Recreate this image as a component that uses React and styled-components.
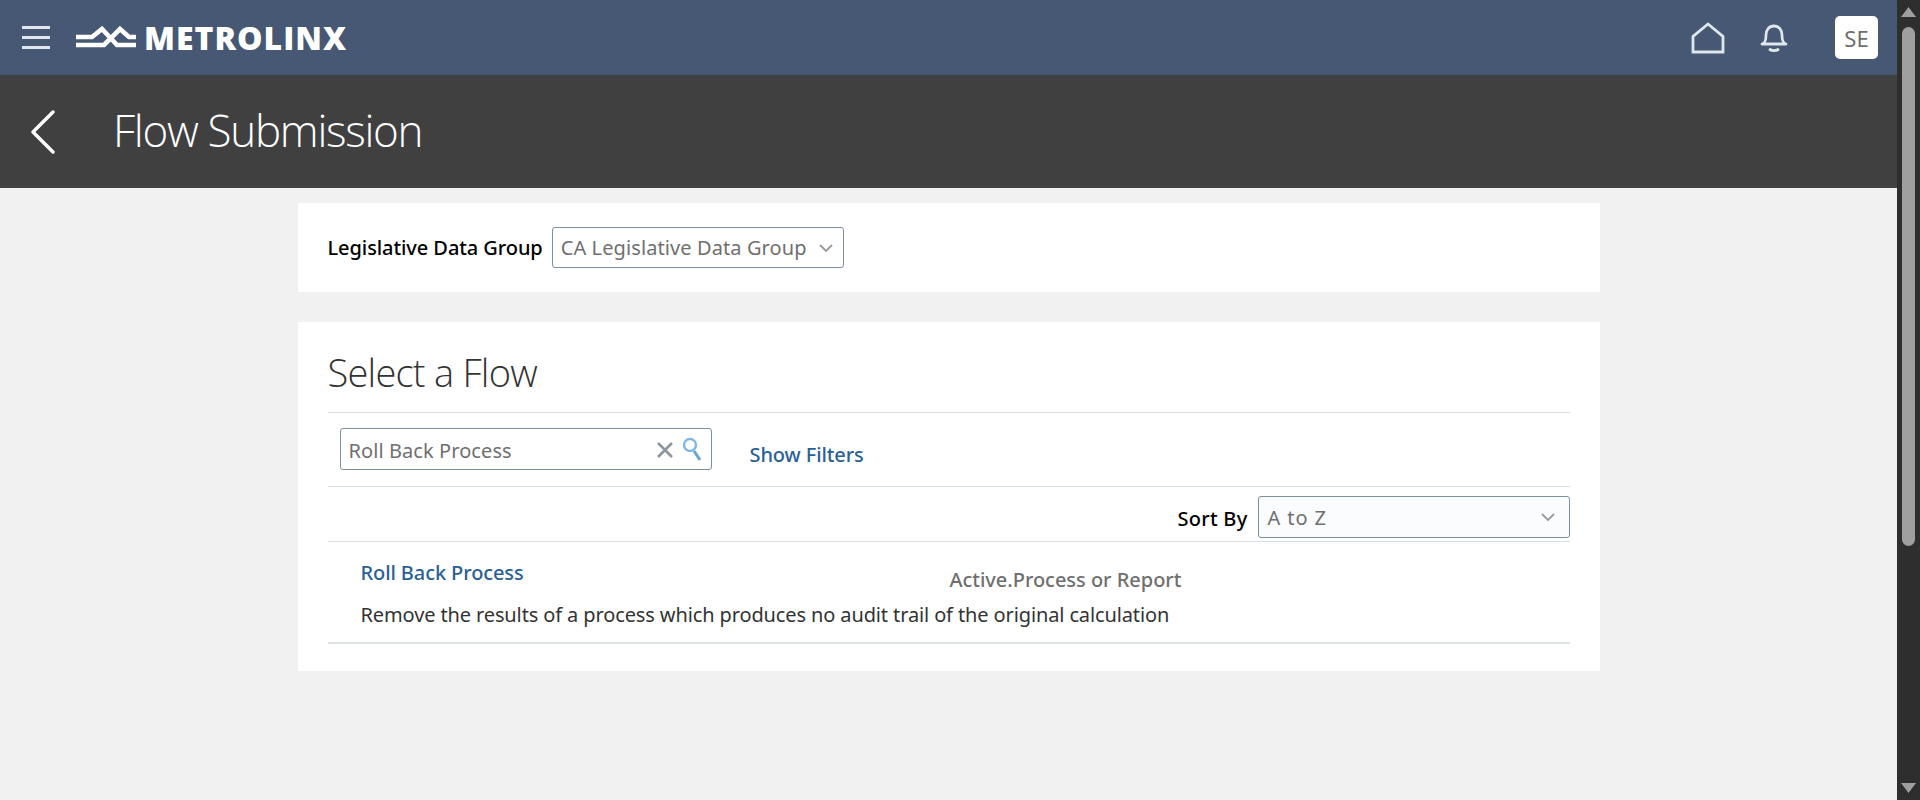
import React from "react";
import styled, { createGlobalStyle } from "styled-components";

const Global = createGlobalStyle`
  html, body { margin: 0; height: 100%; overflow: hidden; }
  body { font-family: "Noto Sans", "Open Sans", sans-serif; background: #f1f1f1; }
  #root { height: 100%; }
  * { box-sizing: border-box; }
`;
const Shell = styled.div`display: flex; height: 800px;`;
const Main = styled.div`flex: 1; min-width: 0; display: flex; flex-direction: column;`;
const TopBar = styled.header`height: 75px; background: #465873; display: flex; align-items: center; padding: 0 19px 0 22px; color: #dfe6ee;`;
const Burger = styled.div`width: 28px; display: flex; flex-direction: column; gap: 7px; margin-right: 26px; span { height: 3px; background: #dfe6ee; display: block; }`;
const LogoMark = styled.svg`width: 60px; height: 24px; margin-right: 8px;`;
const LogoText = styled.div`font: 800 32px/1 "Open Sans", sans-serif; color: #fff; letter-spacing: 1px;`;
const Spacer = styled.div`flex: 1;`;
const HomeIcon = styled.svg`width: 34px; height: 32px; margin-right: 35px;`;
const BellIcon = styled.svg`width: 28px; height: 30px; margin-right: 47px;`;
const Avatar = styled.div`width: 43px; height: 43px; border-radius: 5px; background: #fff; color: #6e6e6e; font-size: 22px; display: flex; align-items: center; justify-content: center;`;
const TitleBar = styled.div`height: 113px; background: #404040; display: flex; align-items: center; padding-left: 30px; color: #fff;`;
const BackIcon = styled.svg`width: 26px; height: 44px; margin-right: 57px;`;
const Title = styled.h1`margin: 0; font: 300 44px/1 "Open Sans", sans-serif; color: #fff; letter-spacing: -1.3px; padding-bottom: 3px;`;
const Content = styled.main`width: 1302px; margin: 15px auto 0; display: flex; flex-direction: column; gap: 30px;`;
const Card = styled.section`background: #fff; padding: ${p => p.$pad};`;
const LdgRow = styled.div`display: flex; align-items: center; gap: 9px; height: 41px;`;
const Label = styled.label`font-size: 20px; font-weight: 500; letter-spacing: -0.08px; color: #000; white-space: nowrap;`;
const Select = styled.div`height: ${p => p.$h}px; width: ${p => p.$w}px; border: 1px solid #7c8f9c; border-radius: 3px; background: ${p => p.$bg || "#fff"}; display: flex; align-items: center; padding: 0 ${p => p.$pr}px 0 ${p => p.$pl}px; color: #6f6f6f; font-size: 20px; letter-spacing: ${p => p.$ls}px; justify-content: space-between; white-space: nowrap; overflow: hidden;`;
const Chevron = styled.svg`width: 16px; height: 10px; flex: none;`;
const Heading = styled.h2`margin: 0; height: 91px; font: 300 38px/1 "Open Sans", sans-serif; color: #333; letter-spacing: -0.75px; padding-top: 31px; border-bottom: 1px solid #d9e0e6;`;
const Filters = styled.div`display: flex; height: 74px; padding: 15px 0 0 12px; border-bottom: 1px solid #d9e0e6; gap: 37px;`;
const Search = styled.div`width: 372px; height: 42px; border: 1px solid #7c8f9c; border-radius: 3px; display: flex; align-items: center; padding: 2px 9px 0 8px; color: #6f6f6f; font-size: 20px; letter-spacing: 0.08px;`;
const SearchValue = styled.span`flex: 1;`;
const ClearIcon = styled.svg`width: 18px; height: 18px; margin-right: 8px;`;
const SearchIcon = styled.svg`width: 20px; height: 26px; margin-bottom: 2px;`;
const LinkText = styled.a`color: #2a5f97; font-size: 20px; letter-spacing: -0.1px; font-weight: 500;`;
const ShowFilters = styled(LinkText)`margin: 13px 0 0 1px;`;
const SortRow = styled.div`height: 55px; padding-top: 9px; border-bottom: 1px solid #d9e0e6; display: flex; justify-content: flex-end; align-items: flex-start; gap: 10px;`;
const SortLabel = styled(Label)`margin-top: 9px; letter-spacing: 0.25px;`;
const ResultRow = styled.div`height: 102px; border-bottom: 2px solid #dde3e8; padding: 17px 0 0 33px;`;
const ResultTop = styled.div`display: grid; grid-template-columns: 589px auto; height: 42px;`;
const Meta = styled.div`color: #6f6f6f; font-size: 20px; letter-spacing: -0.03px; font-weight: 500; margin-top: 7px;`;
const Desc = styled.div`color: #333; font-size: 20px; letter-spacing: -0.12px; white-space: nowrap;`;
const Scrollbar = styled.aside`width: 23px; background: #2e2e2e; display: flex; flex-direction: column; align-items: center; padding: 7px 1px 7px 0;`;
const ScrollArrow = styled.svg`width: 15px; height: 10px; flex: none;`;
const Thumb = styled.div`width: 13px; height: 519px; margin-top: 10px; border-radius: 7px; background: #9f9f9f;`;

const Chev = () => (
  <Chevron viewBox="0 0 16 10"><path d="M2 2l6 6 6-6" fill="none" stroke="#9a9a9a" strokeWidth="1.8" /></Chevron>
);

export default function App() {
  return (
    <Shell>
      <Global />
      <Main>
        <TopBar>
          <Burger><span /><span /><span /></Burger>
          <LogoMark viewBox="0 0 60 24">
            <path d="M0 11H16L26 3L41 19H60M0 19H28L44 3L53 11H60" fill="none" stroke="#fff" strokeWidth="4.6" />
          </LogoMark>
          <LogoText>METROLINX</LogoText>
          <Spacer />
          <HomeIcon viewBox="0 0 34 32"><path d="M2 30V14.5L17 2l15 12.5V30z" fill="none" stroke="#dfe6ee" strokeWidth="2.8" /></HomeIcon>
          <BellIcon viewBox="0 0 28 30">
            <path d="M2 21h24c-3-1-4-3-4-9 0-5-3-9-8-9s-8 4-8 9c0 6-1 8-4 9z" fill="none" stroke="#dfe6ee" strokeWidth="2.8" strokeLinejoin="round" />
            <path d="M9 26c3 2 7 2 10 0" fill="none" stroke="#dfe6ee" strokeWidth="2.8" />
          </BellIcon>
          <Avatar>SE</Avatar>
        </TopBar>
        <TitleBar>
          <BackIcon viewBox="0 0 26 44"><path d="M23 2L3 22l20 20" fill="none" stroke="#fff" strokeWidth="3.4" strokeLinecap="round" strokeLinejoin="round" /></BackIcon>
          <Title>Flow Submission</Title>
        </TitleBar>
        <Content>
          <Card $pad="24px 30px">
            <LdgRow>
              <Label>Legislative Data Group</Label>
              <Select $w={292} $h={41} $pr={9} $pl={8} $ls={0.1}>CA Legislative Data Group<Chev /></Select>
            </LdgRow>
          </Card>
          <Card $pad="0 30px 27px">
            <Heading>Select a Flow</Heading>
            <Filters>
              <Search>
                <SearchValue>Roll Back Process</SearchValue>
                <ClearIcon viewBox="0 0 18 18"><path d="M2 2l14 14M16 2L2 16" stroke="#8c959c" strokeWidth="2.6" /></ClearIcon>
                <SearchIcon viewBox="0 0 20 26">
                  <circle cx="8" cy="9" r="6" fill="none" stroke="#7fb6e6" strokeWidth="2.4" />
                  <path d="M12 15l6 9" stroke="#6aa5d8" strokeWidth="3" />
                </SearchIcon>
              </Search>
              <ShowFilters>Show Filters</ShowFilters>
            </Filters>
            <SortRow>
              <SortLabel>Sort By</SortLabel>
              <Select $w={312} $h={42} $pr={13} $pl={9} $ls={0.9} $bg="#fbfcfe">A to Z<Chev /></Select>
            </SortRow>
            <ResultRow>
              <ResultTop>
                <LinkText>Roll Back Process</LinkText>
                <Meta>Active.Process or Report</Meta>
              </ResultTop>
              <Desc>Remove the results of a process which produces no audit trail of the original calculation</Desc>
            </ResultRow>
          </Card>
        </Content>
      </Main>
      <Scrollbar>
        <ScrollArrow viewBox="0 0 15 10"><path d="M7.5 0L15 10H0z" fill="#9f9f9f" /></ScrollArrow>
        <Thumb />
        <Spacer />
        <ScrollArrow viewBox="0 0 15 10"><path d="M7.5 10L15 0H0z" fill="#9f9f9f" /></ScrollArrow>
      </Scrollbar>
    </Shell>
  );
}
